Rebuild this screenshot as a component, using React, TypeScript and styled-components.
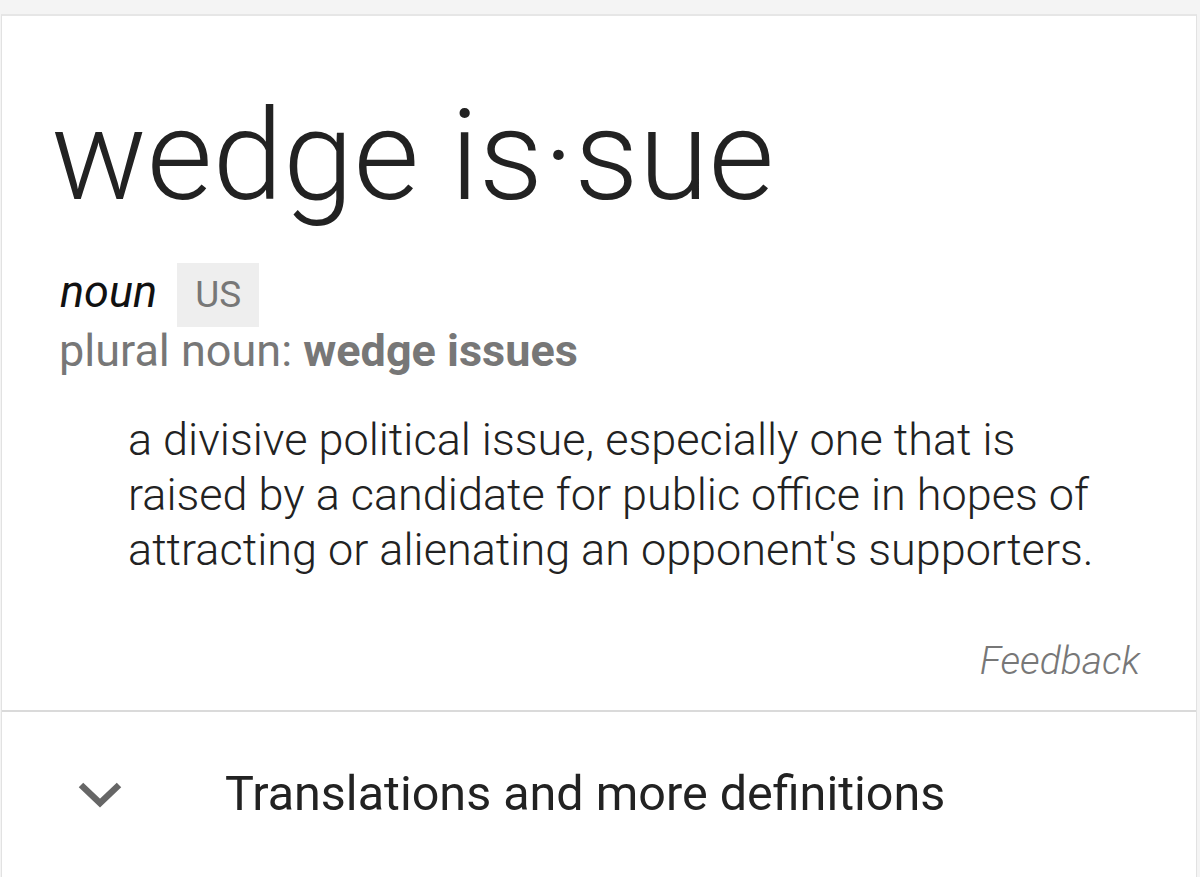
import React from "react";
import styled, { createGlobalStyle } from "styled-components";

const Global = createGlobalStyle`
  html, body { margin: 0; padding: 0; background: #f4f4f4; }
  body { font-family: Roboto, "Liberation Sans", Arial, sans-serif; overflow: hidden; }
`;

const Page = styled.div`
  padding-top: 14px;
  padding-left: 1px;
  padding-right: 3px;
  height: 877px;
  box-sizing: border-box;
`;

const Card = styled.div`
  background: #fff;
  border: 1px solid #e2e2e2;
  border-top: 2px solid #e6e6e6;
  height: 100%;
`;

const Main = styled.section`
  padding: 77px 56px 25px 58px;
  border-bottom: 2px solid #dadada;
`;

const Title = styled.h1`
  margin: 0 0 0 -9px;
  font-size: 127px;
  font-weight: 300;
  line-height: 126px;
  color: #222;
  letter-spacing: 0;
`;

const PosRow = styled.div`
  display: flex;
  align-items: baseline;
  gap: 20px;
  margin-top: 44px;
`;

const Pos = styled.span`
  font-size: 45px;
  font-style: italic;
  color: #111;
`;

const Badge = styled.span`
  display: inline-block;
  background: #eeeeee;
  color: #777;
  font-size: 37px;
  line-height: 64px;
  padding: 0 18px;
`;

const Plural = styled.div`
  font-size: 45px;
  line-height: 48px;
  color: #777;
  margin-left: -1px;
  b { font-weight: 700; }
`;

const Definition = styled.p`
  margin: 37px 0 0 0;
  padding-left: 68px;
  font-size: 45px;
  line-height: 55px;
  font-weight: 300;
  color: #222;
  max-width: 1000px;
`;

const Feedback = styled.div`
  margin-top: 60px;
  text-align: right;
  font-size: 39px;
  line-height: 48px;
  font-style: italic;
  font-weight: 300;
  color: #777;
`;

const More = styled.div`
  display: flex;
  align-items: center;
  padding: 52px 0 0 76px;
`;

const ChevronBox = styled.span`
  display: flex;
  width: 147px;
`;

const MoreText = styled.span`
  font-size: 48.5px;
  line-height: 60px;
  color: #222;
`;

export default function App() {
  return (
    <>
      <Global />
      <Page>
        <Card>
          <Main>
            <Title>wedge is·sue</Title>
            <PosRow>
              <Pos>noun</Pos>
              <Badge>US</Badge>
            </PosRow>
            <Plural>
              plural noun: <b>wedge issues</b>
            </Plural>
            <Definition>
              a divisive political issue, especially one that is raised by a candidate for
              public office in hopes of attracting or alienating an opponent's supporters.
            </Definition>
            <Feedback>Feedback</Feedback>
          </Main>
          <More>
            <ChevronBox>
              <svg width="44" height="28" viewBox="0 0 44 28">
                <polyline points="3,5 22,23 41,5" fill="none" stroke="#666" strokeWidth="6.5" />
              </svg>
            </ChevronBox>
            <MoreText>Translations and more definitions</MoreText>
          </More>
        </Card>
      </Page>
    </>
  );
}
